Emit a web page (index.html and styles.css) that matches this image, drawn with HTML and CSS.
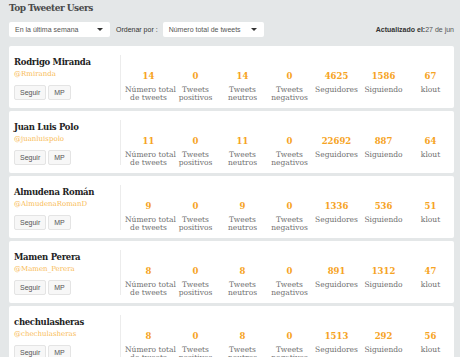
FILE: index.html
```html
<!DOCTYPE html>
<html lang="es">
<head>
    <meta charset="UTF-8">
    <title>Top Tweeter Users</title>
    <link rel="stylesheet" href="styles.css">
</head>
<body>
    <div class="page">
        <h1>Top Tweeter Users</h1>
        <div class="toolbar">
            <div class="select">En la última semana <span class="caret"></span></div>
            <label>Ordenar por :</label>
            <div class="select">Número total de tweets <span class="caret"></span></div>
            <div class="updated"><b>Actualizado el:</b>27 de jun</div>
        </div>

        <div class="card">
            <div class="user">
                <div class="name">Rodrigo Miranda</div>
                <div class="handle">@Rmiranda</div>
                <div class="actions"><button>Seguir</button><button>MP</button></div>
            </div>
            <div class="stats">
                <div class="stat"><span class="num">14</span>Número total<br>de tweets</div>
                <div class="stat"><span class="num">0</span>Tweets<br>positivos</div>
                <div class="stat"><span class="num">14</span>Tweets<br>neutros</div>
                <div class="stat"><span class="num">0</span>Tweets<br>negativos</div>
                <div class="stat"><span class="num">4625</span>Seguidores</div>
                <div class="stat"><span class="num">1586</span>Siguiendo</div>
                <div class="stat"><span class="num">67</span>klout</div>
            </div>
        </div>

        <div class="card">
            <div class="user">
                <div class="name">Juan Luis Polo</div>
                <div class="handle">@juanluispolo</div>
                <div class="actions"><button>Seguir</button><button>MP</button></div>
            </div>
            <div class="stats">
                <div class="stat"><span class="num">11</span>Número total<br>de tweets</div>
                <div class="stat"><span class="num">0</span>Tweets<br>positivos</div>
                <div class="stat"><span class="num">11</span>Tweets<br>neutros</div>
                <div class="stat"><span class="num">0</span>Tweets<br>negativos</div>
                <div class="stat"><span class="num">22692</span>Seguidores</div>
                <div class="stat"><span class="num">887</span>Siguiendo</div>
                <div class="stat"><span class="num">64</span>klout</div>
            </div>
        </div>

        <div class="card">
            <div class="user">
                <div class="name">Almudena Román</div>
                <div class="handle">@AlmudenaRomanD</div>
                <div class="actions"><button>Seguir</button><button>MP</button></div>
            </div>
            <div class="stats">
                <div class="stat"><span class="num">9</span>Número total<br>de tweets</div>
                <div class="stat"><span class="num">0</span>Tweets<br>positivos</div>
                <div class="stat"><span class="num">9</span>Tweets<br>neutros</div>
                <div class="stat"><span class="num">0</span>Tweets<br>negativos</div>
                <div class="stat"><span class="num">1336</span>Seguidores</div>
                <div class="stat"><span class="num">536</span>Siguiendo</div>
                <div class="stat"><span class="num">51</span>klout</div>
            </div>
        </div>

        <div class="card">
            <div class="user">
                <div class="name">Mamen Perera</div>
                <div class="handle">@Mamen_Perera</div>
                <div class="actions"><button>Seguir</button><button>MP</button></div>
            </div>
            <div class="stats">
                <div class="stat"><span class="num">8</span>Número total<br>de tweets</div>
                <div class="stat"><span class="num">0</span>Tweets<br>positivos</div>
                <div class="stat"><span class="num">8</span>Tweets<br>neutros</div>
                <div class="stat"><span class="num">0</span>Tweets<br>negativos</div>
                <div class="stat"><span class="num">891</span>Seguidores</div>
                <div class="stat"><span class="num">1312</span>Siguiendo</div>
                <div class="stat"><span class="num">47</span>klout</div>
            </div>
        </div>

        <div class="card">
            <div class="user">
                <div class="name">chechulasheras</div>
                <div class="handle">@chechulasheras</div>
                <div class="actions"><button>Seguir</button><button>MP</button></div>
            </div>
            <div class="stats">
                <div class="stat"><span class="num">8</span>Número total<br>de tweets</div>
                <div class="stat"><span class="num">0</span>Tweets<br>positivos</div>
                <div class="stat"><span class="num">8</span>Tweets<br>neutros</div>
                <div class="stat"><span class="num">0</span>Tweets<br>negativos</div>
                <div class="stat"><span class="num">1513</span>Seguidores</div>
                <div class="stat"><span class="num">292</span>Siguiendo</div>
                <div class="stat"><span class="num">56</span>klout</div>
            </div>
        </div>
    </div>
</body>
</html>
```

FILE: styles.css
```css
body {
    margin: 0;
    background-color: #e4e7e8;
    font-family: "DejaVu Serif", serif;
    color: #222;
}
.page {
    padding: 0 6px 0 9px;
}
h1 {
    margin: 0;
    padding-top: 3px;
    height: 19px;
    font-size: 9px;
    line-height: 11px;
    letter-spacing: -0.5px;
    font-weight: bold;
    color: #4a4a4a;
}
.toolbar {
    display: flex;
    align-items: center;
    height: 15px;
    margin-bottom: 9px;
    font-family: "Liberation Sans", sans-serif;
    font-size: 7px;
    color: #333;
}
.select {
    display: flex;
    align-items: center;
    justify-content: space-between;
    box-sizing: border-box;
    width: 101px;
    height: 15px;
    padding: 0 7px 0 6px;
    background-color: #fff;
    border-radius: 2px;
    color: #555;
}
.caret {
    width: 0;
    height: 0;
    border-left: 3px solid transparent;
    border-right: 3px solid transparent;
    border-top: 3px solid #333;
}
label {
    padding: 0 5px 0 6px;
}
.updated {
    margin-left: auto;
    color: #555;
}
.updated b {
    color: #333;
}
.card {
    display: flex;
    box-sizing: border-box;
    height: 62px;
    margin-bottom: 3px;
    padding-top: 9px;
    background-color: #fff;
    border-radius: 2px;
}
.user {
    box-sizing: border-box;
    width: 112px;
    height: 45px;
    padding-left: 5px;
    border-right: 1px solid #ececec;
}
.name {
    font-size: 8.5px;
    font-weight: bold;
    line-height: 13px;
    letter-spacing: -0.3px;
    margin-top: 1px;
    color: #222;
    white-space: nowrap;
}
.handle {
    font-size: 7px;
    line-height: 10px;
    color: #f8bb55;
}
.actions {
    display: flex;
    gap: 2px;
    margin-top: 6px;
}
button {
    height: 15px;
    padding: 0 5px;
    font-family: "Liberation Sans", sans-serif;
    font-size: 7px;
    color: #555;
    background-color: #f7f7f7;
    border: 1px solid #e4e4e4;
    border-radius: 2px;
}
.stats {
    display: grid;
    grid-template-columns: repeat(7, 47px);
    padding: 15px 0 0 4px;
}
.stat {
    text-align: center;
    font-size: 7.5px;
    line-height: 8px;
    color: #707070;
    white-space: nowrap;
}
.num {
    display: block;
    margin-bottom: 4px;
    font-size: 8.5px;
    line-height: 12px;
    font-weight: bold;
    color: #f6a323;
}
```
